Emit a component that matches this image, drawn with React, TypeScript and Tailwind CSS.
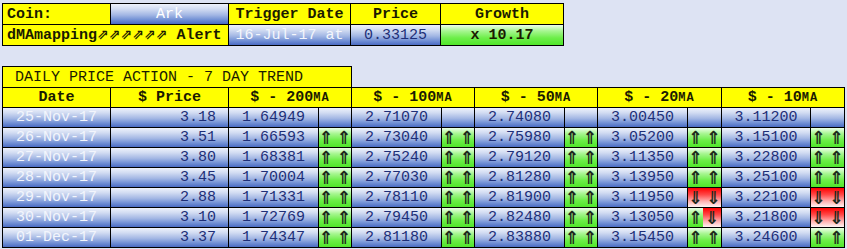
import React from "react";

const FONT = { fontFamily: '"Liberation Mono", "DejaVu Sans Mono", monospace' };
const ARROW = { fontFamily: '"DejaVu Sans", sans-serif' };

const blue = "bg-[linear-gradient(to_bottom,#eef2fb_0%,#d2dcf2_25%,#a3b7e4_55%,#6f8ed4_80%,#4a6bc2_100%)]";
const green = "bg-[linear-gradient(to_bottom,#eeffe8_0%,#a6f690_30%,#6cee48_65%,#50e62a_100%)]";
const red = "bg-[linear-gradient(to_bottom,#ff0000_0%,#ff4848_35%,#ffb0b0_70%,#fff4f4_100%)]";
const yellow = "bg-[#ffff00]";

type Trend = "u" | "d" | "ud" | null;

const rows: { date: string; price: string; ma: [string, Trend][] }[] = [
  { date: "25-Nov-17", price: "3.18", ma: [["1.64949", null], ["2.71070", null], ["2.74080", null], ["3.00450", null], ["3.11200", null]] },
  { date: "26-Nov-17", price: "3.51", ma: [["1.66593", "u"], ["2.73040", "u"], ["2.75980", "u"], ["3.05200", "u"], ["3.15100", "u"]] },
  { date: "27-Nov-17", price: "3.80", ma: [["1.68381", "u"], ["2.75240", "u"], ["2.79120", "u"], ["3.11350", "u"], ["3.22800", "u"]] },
  { date: "28-Nov-17", price: "3.45", ma: [["1.70004", "u"], ["2.77030", "u"], ["2.81280", "u"], ["3.13950", "u"], ["3.25100", "u"]] },
  { date: "29-Nov-17", price: "2.88", ma: [["1.71331", "u"], ["2.78110", "u"], ["2.81900", "u"], ["3.11950", "d"], ["3.22100", "d"]] },
  { date: "30-Nov-17", price: "3.10", ma: [["1.72769", "u"], ["2.79450", "u"], ["2.82480", "u"], ["3.13050", "ud"], ["3.21800", "d"]] },
  { date: "01-Dec-17", price: "3.37", ma: [["1.74347", "u"], ["2.81180", "u"], ["2.83880", "u"], ["3.15450", "u"], ["3.24600", "u"]] },
];

function Arr({ g }: { g: string }) {
  return (
    <span
      style={ARROW}
      className="flex w-[9px] justify-center text-[18px] font-bold leading-none text-[#1e2a1c]"
    >
      {g}
    </span>
  );
}

function ArrowCell({ t }: { t: Trend }) {
  if (t === null) return <div className={blue} />;
  if (t === "ud")
    return (
      <div className="flex">
        <div className={`${green} flex w-[15px] items-center justify-center`}>
          <Arr g="⇑" />
        </div>
        <div className={`${red} flex flex-1 items-center justify-center`}>
          <Arr g="⇓" />
        </div>
      </div>
    );
  const cls = t === "u" ? green : red;
  const g = t === "u" ? "⇑" : "⇓";
  return (
    <div className={`${cls} flex items-center justify-center gap-[9px]`}>
      <Arr g={g} />
      <Arr g={g} />
    </div>
  );
}

function MAHead({ n }: { n: string }) {
  return (
    <div className={`${yellow} col-span-2 flex items-center justify-center whitespace-pre font-bold text-[#1a1a00]`}>
      <span>
        {"$ - " + n}
        <span className="text-[12px] tracking-[1px]">MA</span>
      </span>
    </div>
  );
}

export default function App() {
  return (
    <div className="min-h-screen w-full bg-[#dde3f3] pl-[2px] pt-[3px] text-[15px] leading-none" style={FONT}>
      {/* top table */}
      <div className="grid w-fit auto-rows-[20px] grid-cols-[107px_117px_121px_89px_122px] gap-px bg-black p-px">
        <div className={`${yellow} flex items-center pl-[4px] font-bold text-[#1a1a00]`}>Coin:</div>
        <div className={`${blue} flex items-center justify-center text-white`}>Ark</div>
        <div className={`${yellow} flex items-center justify-center font-bold text-[#1a1a00]`}>Trigger Date</div>
        <div className={`${yellow} flex items-center justify-center font-bold text-[#1a1a00]`}>Price</div>
        <div className={`${yellow} flex items-center justify-center font-bold text-[#1a1a00]`}>Growth</div>

        <div className={`${yellow} col-span-2 flex items-center pl-[4px] font-bold text-[#1a1a00]`}>
          <span className="whitespace-pre">
            dMAmapping
            <span style={ARROW} className="text-[14px] font-bold">
              ⇗⇗⇗⇗⇗⇗
            </span>
            {" Alert"}
          </span>
        </div>
        <div className={`${blue} flex items-center justify-center whitespace-pre text-[#f4f6fc]`}>16-Jul-17 at</div>
        <div className={`${blue} flex items-center justify-center text-[#1e2f78]`}>0.33125</div>
        <div className={`${green} flex items-center justify-center font-bold text-[#1a1a00]`}>x 10.17</div>
      </div>

      {/* title */}
      <div className="mt-[20px] h-[21px] w-[350px] border-x border-t border-black">
        <div className={`${yellow} flex h-[20px] items-center whitespace-pre pl-[12px] text-[#1a1a00]`}>
          DAILY PRICE ACTION - 7 DAY TREND
        </div>
      </div>

      {/* main table */}
      <div className="grid w-fit auto-rows-[19px] grid-cols-[107px_117px_89px_32px_89px_32px_89px_32px_89px_33px_88px_33px] gap-px bg-black p-px">
        <div className={`${yellow} flex items-center justify-center font-bold text-[#1a1a00]`}>Date</div>
        <div className={`${yellow} flex items-center justify-center whitespace-pre font-bold text-[#1a1a00]`}>$ Price</div>
        <MAHead n="200" />
        <MAHead n="100" />
        <MAHead n="50" />
        <MAHead n="20" />
        <MAHead n="10" />

        {rows.map((r) => (
          <React.Fragment key={r.date}>
            <div className={`${blue} flex items-center justify-center text-[#f2f5fc]`}>{r.date}</div>
            <div className={`${blue} flex items-center justify-end pr-[12px] text-[#1e2f78]`}>{r.price}</div>
            {r.ma.map(([v, t], i) => (
              <React.Fragment key={i}>
                <div className={`${blue} flex items-center justify-center text-[#1e2f78]`}>{v}</div>
                <ArrowCell t={t} />
              </React.Fragment>
            ))}
          </React.Fragment>
        ))}
      </div>
    </div>
  );
}
